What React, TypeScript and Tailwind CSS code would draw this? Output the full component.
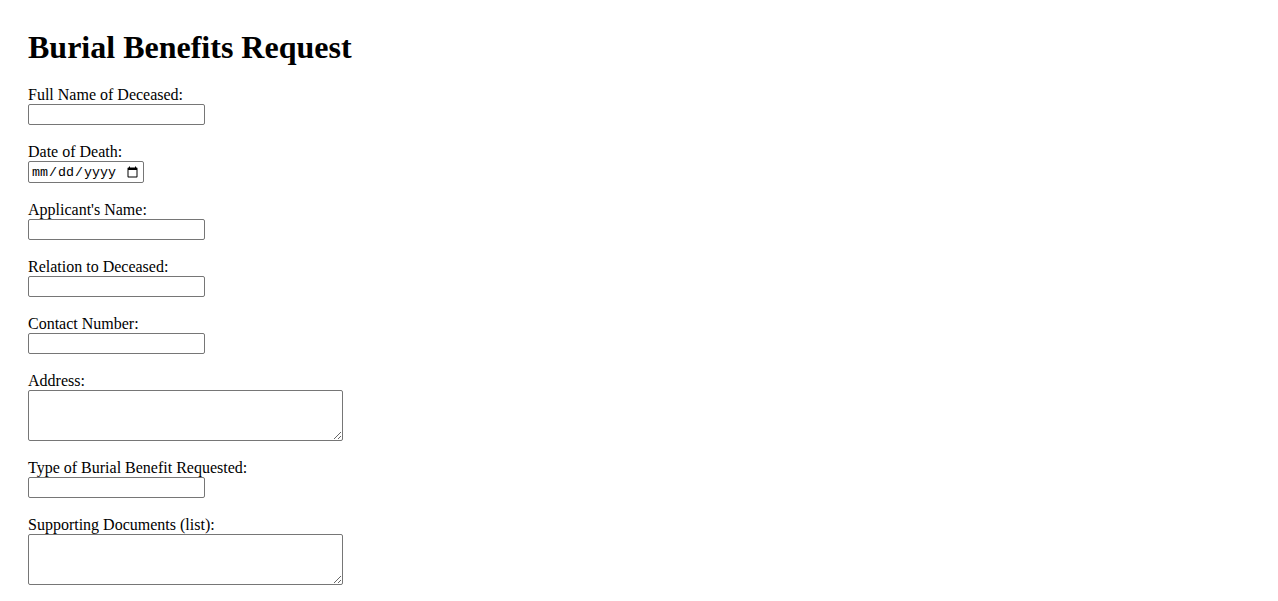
import React from 'react';

const serif = { fontFamily: '"Liberation Serif", "Times New Roman", serif' };

interface FieldProps {
    label: string;
    kind?: 'text' | 'date' | 'area';
}

function Field({ label, kind = 'text' }: FieldProps) {
    return (
        <div className="mb-[17px]">
            <label className="block pt-[1px] text-[16px] leading-[18px] text-black">{label}</label>
            {kind === 'area' ? (
                <textarea className="block w-[315px] h-[51px] resize border border-[#767676] rounded-[2px] bg-white px-[2px] py-[2px] text-[13.33px] [font-family:'Liberation_Mono',monospace]" />
            ) : kind === 'date' ? (
                <input
                    type="date"
                    className="block w-[116px] h-[22px] border border-[#767676] rounded-[2px] bg-white px-[2px] pt-[2px] pb-0 text-[13.33px] [font-family:'Liberation_Mono',monospace]"
                />
            ) : (
                <input
                    type="text"
                    className="block w-[177px] h-[21px] border border-[#767676] rounded-[2px] bg-white px-[2px] py-[1px] text-[13.33px] [font-family:'Liberation_Sans',Arial,sans-serif]"
                />
            )}
        </div>
    );
}

export default function App() {
    return (
        <div className="min-h-screen bg-white text-black pl-[28px] pt-[29px]" style={serif}>
            <h1 className="text-[32px] font-bold leading-[37px] mb-[19px]">Burial Benefits Request</h1>
            <form>
                <Field label="Full Name of Deceased:" />
                <Field label="Date of Death:" kind="date" />
                <Field label="Applicant's Name:" />
                <Field label="Relation to Deceased:" />
                <Field label="Contact Number:" />
                <Field label="Address:" kind="area" />
                <Field label="Type of Burial Benefit Requested:" />
                <Field label="Supporting Documents (list):" kind="area" />
            </form>
        </div>
    );
}
